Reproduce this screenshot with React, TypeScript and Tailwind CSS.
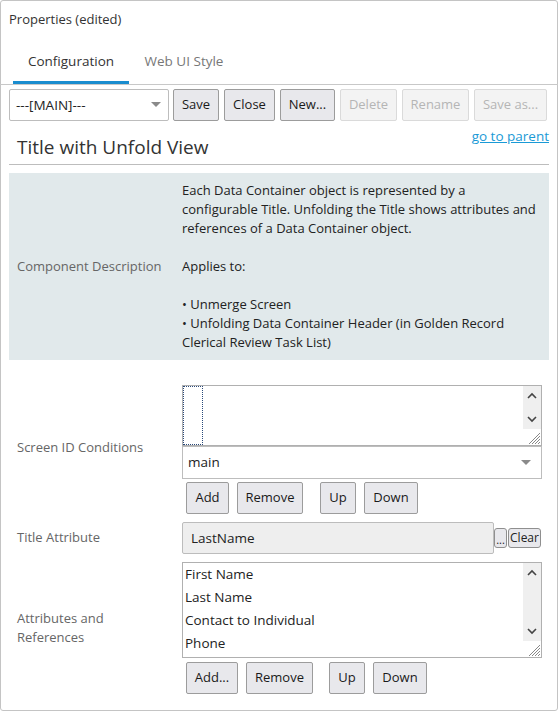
import React from "react";

const font = { fontFamily: '"Open Sans", "Noto Sans", Arial, sans-serif' };

function Btn({ label, w, disabled }: { label: string; w: string; disabled?: boolean }) {
  return (
    <div
      className={
        "h-[32px] flex items-center justify-center rounded-[2px] border text-[13px] " +
        w +
        (disabled
          ? " bg-[#f3f3f3] border-[#dadada] text-[#b5b5b5]"
          : " bg-[#e8e8ec] border-[#9c9c9c] text-[#1a1a1a]")
      }
    >
      {label}
    </div>
  );
}

function Caret({ className }: { className?: string }) {
  return (
    <svg width="10" height="6" viewBox="0 0 10 6" className={className}>
      <path d="M0 0 L10 0 L5 5 Z" fill="#8a8a8a" />
    </svg>
  );
}

function Scrollbar({ h }: { h: string }) {
  return (
    <div className={"w-[18px] bg-[#efefef] flex flex-col items-center justify-between py-[6px] " + h}>
      <svg width="10" height="7" viewBox="0 0 10 7">
        <path d="M1 6 L5 2 L9 6" stroke="#444" strokeWidth="1.6" fill="none" />
      </svg>
      <svg width="10" height="7" viewBox="0 0 10 7">
        <path d="M1 1 L5 5 L9 1" stroke="#444" strokeWidth="1.6" fill="none" />
      </svg>
    </div>
  );
}

function Grip() {
  return (
    <svg width="14" height="14" viewBox="0 0 14 14">
      <path d="M13 2 L2 13 M13 5 L5 13 M13 8 L8 13 M13 11 L11 13" stroke="#888" strokeWidth="1" />
    </svg>
  );
}

export default function App() {
  return (
    <div className="w-[558px] h-[711px] bg-white" style={font}>
      <div className="w-[558px] h-[711px] border border-[#c4c4c4] rounded-[3px] flex flex-col text-[#333]">
        <div className="h-[41px] pt-[9px] pl-[8px] text-[13px] leading-[18px] text-[#333]">Properties (edited)</div>
        <div className="flex border-b border-[#c8c8c8] h-[43px] -mx-px px-px">
          <div className="ml-[12px] w-[116px] h-[42px] border-b-[3px] border-[#1a8dcf] flex items-center justify-center text-[13.5px] text-[#333]">
            Configuration
          </div>
          <div className="w-[110px] h-[42px] pb-[3px] flex items-center justify-center text-[13.5px] text-[#777]">
            Web UI Style
          </div>
        </div>
        <div className="px-[8px]">
          <div className="mt-[4px] flex items-center">
            <div className="w-[160px] h-[32px] border border-[#bdbdbd] rounded-[2px] flex items-center justify-between pl-[6px] pr-[7px] text-[13.5px] text-[#222]">
              <span>---[MAIN]---</span>
              <Caret />
            </div>
            <div className="ml-[4px] flex gap-[5px]">
              <Btn label="Save" w="w-[46px]" />
              <Btn label="Close" w="w-[51px]" />
              <Btn label="New..." w="w-[55px]" />
              <Btn label="Delete" w="w-[57px]" disabled />
              <Btn label="Rename" w="w-[67px]" disabled />
              <Btn label="Save as..." w="w-[73px]" disabled />
            </div>
          </div>
          <div className="mt-[6px] flex justify-between items-start border-b border-[#bdbdbd]">
            <div className="pt-[8px] pb-[5px] pl-[8px] text-[19px] leading-[24px] text-[#333]">Title with Unfold View</div>
            <div className="text-[13.5px] leading-[18px] text-[#1a9ad6] underline">go to parent</div>
          </div>
          <div className="mt-[8px] bg-[#e1e9eb] flex items-center py-[8px]">
            <div className="w-[173px] pl-[8px] text-[13px] text-[#666]">Component Description</div>
            <div className="text-[13px] leading-[19px] text-[#222] whitespace-nowrap">
              <div>Each Data Container object is represented by a</div>
              <div>configurable Title. Unfolding the Title shows attributes and</div>
              <div>references of a Data Container object.</div>
              <div>&nbsp;</div>
              <div>Applies to:</div>
              <div>&nbsp;</div>
              <div>• Unmerge Screen</div>
              <div>• Unfolding Data Container Header (in Golden Record</div>
              <div>Clerical Review Task List)</div>
            </div>
          </div>

          <div className="mt-[25px] flex items-center">
            <div className="w-[173px] pl-[8px] pb-[4px] text-[13px] text-[#666]">Screen ID Conditions</div>
            <div className="w-[360px]">
              <div className="h-[61px] border border-[#b0b0b0] flex">
                <div className="flex-1 flex">
                  <div className="w-[20px] h-full border border-dotted border-[#2a4a7a]" />
                </div>
                <div className="flex flex-col">
                  <Scrollbar h="h-[43px]" />
                  <div className="flex-1 flex items-end justify-end">
                    <Grip />
                  </div>
                </div>
              </div>
              <div className="h-[33px] border border-[#bdbdbd] flex items-center justify-between pl-[5px] pr-[10px] text-[13.5px] text-[#222]">
                <span>main</span>
                <Caret />
              </div>
              <div className="mt-[3px] ml-[4px] flex">
                <Btn label="Add" w="w-[43px]" />
                <div className="ml-[8px]"><Btn label="Remove" w="w-[66px]" /></div>
                <div className="ml-[17px]"><Btn label="Up" w="w-[36px]" /></div>
                <div className="ml-[8px]"><Btn label="Down" w="w-[54px]" /></div>
              </div>
            </div>
          </div>

          <div className="mt-[8px] flex items-center">
            <div className="w-[173px] pl-[8px] text-[13px] text-[#666]">Title Attribute</div>
            <div className="flex items-center">
              <div className="w-[312px] h-[32px] bg-[#eeeeee] border border-[#bcbcbc] rounded-[2px] flex items-center pl-[8px] text-[13.5px] text-[#222]">
                LastName
              </div>
              <div className="w-[13px] h-[20px] border border-[#8f8f8f] rounded-[3px] bg-[#e8e8ec] flex items-end justify-center text-[11px] leading-[14px] text-[#222]">...</div>
              <div className="ml-px w-[33px] h-[20px] border border-[#8f8f8f] rounded-[3px] bg-[#e8e8ec] flex items-center justify-center text-[12px] text-[#222]">Clear</div>
            </div>
          </div>

          <div className="mt-[8px] flex items-center">
            <div className="w-[173px] pl-[8px] text-[13px] leading-[19px] text-[#666]">
              <div>Attributes and</div>
              <div>References</div>
            </div>
            <div className="w-[360px]">
              <div className="h-[96px] border border-[#b0b0b0] flex">
                <div className="flex-1 pl-[2px] text-[13.5px] leading-[23px] text-[#222]">
                  <div>First Name</div>
                  <div>Last Name</div>
                  <div>Contact to Individual</div>
                  <div>Phone</div>
                </div>
                <div className="flex flex-col">
                  <Scrollbar h="h-[78px]" />
                  <div className="flex-1 flex items-end justify-end">
                    <Grip />
                  </div>
                </div>
              </div>
              <div className="mt-[4px] ml-[4px] flex">
                <Btn label="Add..." w="w-[52px]" />
                <div className="ml-[8px]"><Btn label="Remove" w="w-[67px]" /></div>
                <div className="ml-[16px]"><Btn label="Up" w="w-[36px]" /></div>
                <div className="ml-[8px]"><Btn label="Down" w="w-[54px]" /></div>
              </div>
            </div>
          </div>
        </div>
      </div>
    </div>
  );
}
